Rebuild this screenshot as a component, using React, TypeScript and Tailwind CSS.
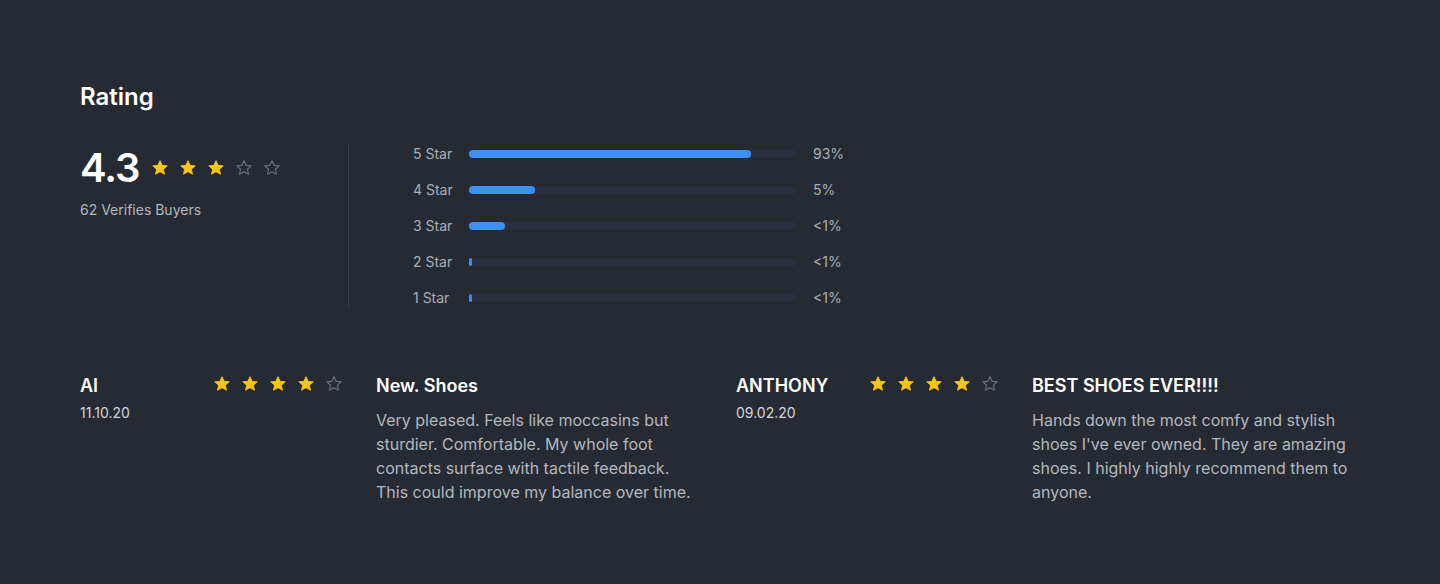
const BARS = [
  { label: "5 Star", fill: 282, pct: "93%" },
  { label: "4 Star", fill: 66, pct: "5%" },
  { label: "3 Star", fill: 36, pct: "<1%" },
  { label: "2 Star", fill: 3, pct: "<1%" },
  { label: "1 Star", fill: 3, pct: "<1%" },
];

const REVIEWS = [
  {
    name: "AI",
    date: "11.10.20",
    stars: 4,
    title: "New. Shoes",
    body: "Very pleased. Feels like moccasins but sturdier. Comfortable. My whole foot contacts surface with tactile feedback. This could improve my balance over time.",
  },
  {
    name: "ANTHONY",
    date: "09.02.20",
    stars: 4,
    title: "BEST SHOES EVER!!!!",
    body: "Hands down the most comfy and stylish shoes I've ever owned. They are amazing shoes. I highly highly recommend them to anyone.",
  },
];

function Star({ filled }: { filled: boolean }) {
  return (
    <svg viewBox="0 0 24 24" className="size-5">
      <path
        d="M12 3.2l2.6 5.6 6.1.6-4.6 4.1 1.3 6-5.4-3.1-5.4 3.1 1.3-6-4.6-4.1 6.1-.6z"
        fill={filled ? "#f8c51c" : "none"}
        stroke={filled ? "#f8c51c" : "#6b717b"}
        strokeWidth={filled ? 1 : 1.4}
        strokeLinejoin="round"
      />
    </svg>
  );
}

function Stars({ n }: { n: number }) {
  return (
    <div className="flex items-center gap-2">
      {[0, 1, 2, 3, 4].map((i) => (
        <Star key={i} filled={i < n} />
      ))}
    </div>
  );
}

export default function App() {
  return (
    <div
      className="min-h-[584px] w-full bg-[#262b33] px-20 pt-[82px] text-white"
      style={{ fontFamily: "Inter, 'Noto Sans', sans-serif" }}
    >
      <h2 className="text-2xl leading-[30px] font-semibold">Rating</h2>

      {/* summary + distribution */}
      <div className="mt-8 flex">
        <div className="w-[268px]">
          <div className="flex items-center gap-2.5">
            <span className="text-[40px] leading-[48px] font-semibold tracking-tight">4.3</span>
            <Stars n={3} />
          </div>
          <p className="mt-2 text-sm leading-5 text-[#b3b7be]">62 Verifies Buyers</p>
        </div>

        <div className="w-px bg-[#3a3f47]" />

        <div className="flex flex-col gap-4 pl-16">
          {BARS.map((b) => (
            <div key={b.label} className="flex h-5 items-center text-sm text-[#a9adb5]">
              <span className="w-[56px]">{b.label}</span>
              <div className="h-2 w-[327px] rounded-full bg-[#29303f]">
                <div className="h-2 rounded-full bg-[#3d8ff0]" style={{ width: b.fill }} />
              </div>
              <span className="ml-[17px]">{b.pct}</span>
            </div>
          ))}
        </div>
      </div>

      {/* reviews */}
      <div className="mt-16 grid grid-cols-[656px_1fr]">
        {REVIEWS.map((r) => (
          <div key={r.name} className="flex">
            <div className="w-[132px]">
              <p className="text-lg leading-7 font-semibold">{r.name}</p>
              <p className="mt-[3px] text-sm leading-5 text-[#d2d5da]">{r.date}</p>
            </div>
            <div className="w-[164px] pt-[2px]">
              <Stars n={r.stars} />
            </div>
            <div className="w-[324px]">
              <p className="text-lg leading-7 font-semibold">{r.title}</p>
              <p className="mt-2 text-base leading-6 text-[#b3b7be]">{r.body}</p>
            </div>
          </div>
        ))}
      </div>
    </div>
  );
}
